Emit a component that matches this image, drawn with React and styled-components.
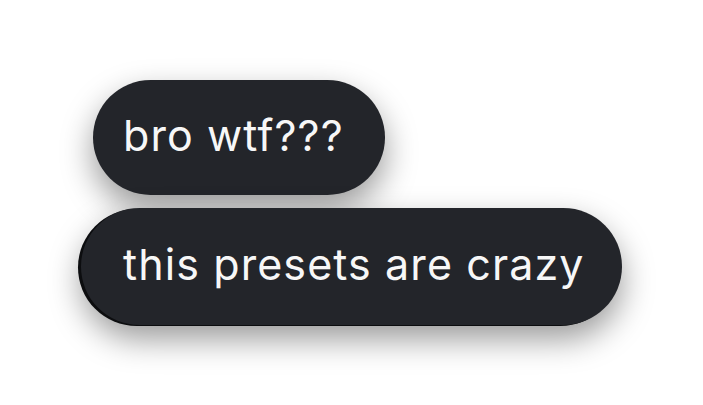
import React from 'react'
import styled, { createGlobalStyle } from 'styled-components'

const GlobalStyle = createGlobalStyle`
    html, body {
        margin: 0;
        padding: 0;
        background: #ffffff;
    }
    body {
        font-family: Inter, "Noto Sans", "Liberation Sans", sans-serif;
    }
`

const Thread = styled.div`
    width: 703px;
    height: 405px;
    box-sizing: border-box;
    padding: 80px 0 0 80px;
    display: flex;
    flex-direction: column;
    align-items: flex-start;
    gap: 13px;
`

// 气泡：深色胶囊 + 柔和阴影
const Bubble = styled.div`
    position: relative;
    margin-left: ${props => props.offset || 0}px;
    height: ${props => props.tall ? 117 : 115}px;
    padding: 0 ${props => props.right}px 0 ${props => props.left}px;
    display: flex;
    align-items: center;
    box-sizing: border-box;
    background: #23252a;
    border-radius: 60px;
    color: #f7f7f7;
    font-size: 43px;
    letter-spacing: 1.1px;
    white-space: nowrap;
    box-shadow: ${props => props.tail
        ? '-3px 1px 0 #0c0d0f, 0 14px 32px rgba(0, 0, 0, 0.4)'
        : '0 14px 32px rgba(0, 0, 0, 0.4)'};
`

const Text = styled.span`
    position: relative;
    top: -3px;
`

class App extends React.Component {
    render() {
        return (
            <>
                <GlobalStyle />
                <Thread>
                    <Bubble offset={13} left={30} right={41}>
                        <Text>bro wtf???</Text>
                    </Bubble>
                    <Bubble tall tail offset={1} left={42} right={37}>
                        <Text>this presets are crazy</Text>
                    </Bubble>
                </Thread>
            </>
        )
    }
}

export default App
